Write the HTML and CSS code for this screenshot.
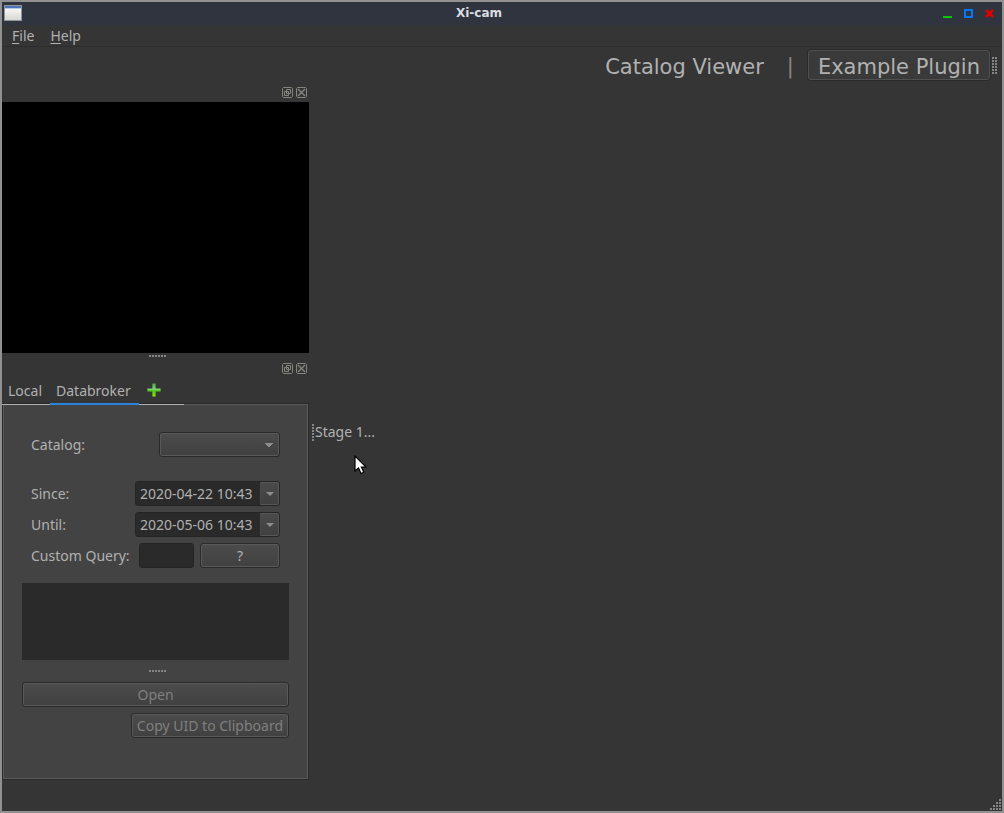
FILE: index.html
```html
<!DOCTYPE html>
<html lang="en">
<head>
<meta charset="utf-8">
<title>Xi-cam</title>
<link rel="stylesheet" href="styles.css">
</head>
<body>
<div class="window">
  <header class="titlebar">
    <svg class="app-icon" width="18" height="16" viewBox="0 0 18 16" aria-hidden="true">
      <defs><linearGradient id="page" x1="0" y1="0" x2="0" y2="1"><stop offset="0" stop-color="#fff"/><stop offset="1" stop-color="#d6d8d2"/></linearGradient></defs>
      <rect width="18" height="16" fill="#8f979c"/>
      <rect x="1" y="1" width="16" height="14" fill="url(#page)"/>
      <rect x="1" y="1" width="16" height="2" fill="#4a74b4"/>
      <rect x="1" y="3" width="16" height="1" fill="#b4cbe8"/>
    </svg>
    <h1 class="title">Xi-cam</h1>
    <div class="window-buttons">
      <button class="icon-button" aria-label="Minimize"><svg width="9" height="9"><path d="M0 7h9v2H0z" fill="#00c800"/></svg></button>
      <button class="icon-button" aria-label="Maximize"><svg width="9" height="9"><path d="M1 1h7v7H1z" fill="none" stroke="#0078ff" stroke-width="2"/></svg></button>
      <button class="icon-button" aria-label="Close"><svg width="9" height="9"><path d="M1 1l7 7M8 1l-7 7" stroke="#e00000" stroke-width="2.6"/></svg></button>
    </div>
  </header>
  <nav class="menubar">
    <button class="menu"><u>F</u>ile</button>
    <button class="menu"><u>H</u>elp</button>
  </nav>
  <div class="toolbar">
    <button class="plugin">Catalog Viewer</button>
    <span class="divider">|</span>
    <button class="plugin plugin-active">Example Plugin</button>
    <span class="grip toolbar-grip"></span>
  </div>
  <main class="workspace">
    <aside class="docks">
      <div class="dock-title">
        <button class="icon-button" aria-label="Float preview"><svg class="dock-icon" viewBox="0 0 11 11"><path d="M1.5.5h8l1 1v8l-1 1h-8l-1-1v-8z"/><path d="M4.5 2.5h4v4h-4zM2.5 4.5h4v4h-4z"/></svg></button>
        <button class="icon-button" aria-label="Close preview"><svg class="dock-icon" viewBox="0 0 11 11"><path d="M1.5.5h8l1 1v8l-1 1h-8l-1-1v-8z"/><path d="M2 2l7 7M9 2l-7 7" stroke-width="1.4"/></svg></button>
      </div>
      <div class="preview"></div>
      <div class="splitter"><span class="grip grip-wide"></span></div>
      <div class="dock-title">
        <button class="icon-button" aria-label="Float data browser"><svg class="dock-icon" viewBox="0 0 11 11"><path d="M1.5.5h8l1 1v8l-1 1h-8l-1-1v-8z"/><path d="M4.5 2.5h4v4h-4zM2.5 4.5h4v4h-4z"/></svg></button>
        <button class="icon-button" aria-label="Close data browser"><svg class="dock-icon" viewBox="0 0 11 11"><path d="M1.5.5h8l1 1v8l-1 1h-8l-1-1v-8z"/><path d="M2 2l7 7M9 2l-7 7" stroke-width="1.4"/></svg></button>
      </div>
      <div class="tabs" role="tablist">
        <button class="tab" role="tab" aria-selected="false">Local</button>
        <button class="tab tab-active" role="tab" aria-selected="true">Databroker</button>
        <button class="tab tab-add" aria-label="Add data source"><svg width="14" height="14" viewBox="0 0 14 14"><defs><linearGradient id="plus" x1="0" y1="0" x2="0" y2="1"><stop offset="0" stop-color="#4fa848"/><stop offset=".45" stop-color="#7fd870"/><stop offset=".55" stop-color="#4cc818"/><stop offset="1" stop-color="#8cf000"/></linearGradient></defs><path d="M5.4 .4h3.2v5h5v3.2h-5v5H5.4v-5h-5V5.4h5z" fill="url(#plus)"/></svg></button>
      </div>
      <section class="panel">
        <form class="query">
          <div class="row row-catalog">
            <label for="catalog">Catalog:</label>
            <select id="catalog" class="control catalog"><option></option></select>
          </div>
          <div class="row">
            <label for="since">Since:</label>
            <span class="date"><input id="since" class="date-input" type="text" value="2020-04-22 10:43"><button type="button" class="date-button" aria-label="Pick since date"><span class="arrow"></span></button></span>
          </div>
          <div class="row">
            <label for="until">Until:</label>
            <span class="date"><input id="until" class="date-input" type="text" value="2020-05-06 10:43"><button type="button" class="date-button" aria-label="Pick until date"><span class="arrow"></span></button></span>
          </div>
          <div class="row">
            <label for="custom">Custom Query:</label>
            <span class="custom-fields">
              <input id="custom" class="custom" type="text">
              <button type="button" class="control help">?</button>
            </span>
          </div>
        </form>
        <div class="results"></div>
        <div class="panel-splitter"><span class="grip grip-wide"></span></div>
        <div class="actions">
          <button class="control open" disabled>Open</button>
          <button class="control copy" disabled>Copy UID to Clipboard</button>
        </div>
      </section>
    </aside>
    <section class="stage">
      <span class="grip grip-tall"></span>
      <p class="stage-text">Stage 1...</p>
    </section>
  </main>
  <footer class="statusbar">
    <svg width="12" height="12" viewBox="0 0 12 12" fill="#858585" aria-hidden="true"><path d="M9 0h2v2H9zM6 3h2v2H6zM9 3h2v2H9zM3 6h2v2H3zM6 6h2v2H6zM9 6h2v2H9zM0 9h2v2H0zM3 9h2v2H3zM6 9h2v2H6zM9 9h2v2H9z"/></svg>
  </footer>
  <svg class="pointer" width="13" height="20" viewBox="0 0 13 20" aria-hidden="true"><path d="M1 1v15l3.5-3 2.5 5.5 2.8-1.3-2.4-5.2H12z" fill="#fff" stroke="#000" stroke-width="1.2"/></svg>
</div>
</body>
</html>
```

FILE: styles.css
```css
* {
  box-sizing: border-box;
}

body {
  margin: 0;
  background: #353535;
  color: #b1b1b1;
  font: 14px/20px "Noto Sans", "Open Sans", sans-serif;
}

button,
input,
select {
  margin: 0;
  padding: 0;
  border: 0;
  background: none;
  color: inherit;
  font: inherit;
}

.window {
  position: relative;
  display: flex;
  flex-direction: column;
  min-height: 100vh;
  border: 2px solid #919191;
}

.titlebar {
  display: grid;
  grid-template-columns: 1fr auto 1fr;
  align-items: center;
  height: 23px;
  padding: 0 8px 1px 2px;
  background: #2f343f;
}

.title {
  margin: 0;
  padding-right: 40px;
  color: #dadde2;
  font: bold 12px/20px "DejaVu Sans", sans-serif;
}

.window-buttons {
  display: flex;
  justify-content: flex-end;
  gap: 12px;
}

.icon-button {
  display: flex;
}

.menubar {
  display: flex;
  gap: 16px;
  height: 22px;
  padding-left: 10px;
  border-bottom: 1px solid #2d2d2d;
}

.menu u {
  text-underline-offset: 2px;
  text-decoration-thickness: 1px;
}

.toolbar {
  display: flex;
  justify-content: flex-end;
  align-items: center;
  height: 36px;
  padding-right: 5px;
  font: 21px/28px "DejaVu Sans", sans-serif;
}

.plugin {
  height: 30px;
  padding: 2px 9px 0;
  border: 1px solid transparent;
  border-radius: 3px;
}

.divider {
  padding: 2px 14px 0 13px;
  color: #858585;
}

.plugin-active {
  border-color: #505050;
  background: #3a3a3a;
  box-shadow: 0 0 0 1px #2a2a2a;
}

.grip {
  flex: none;
  background: #858585;
  -webkit-mask: repeating-linear-gradient(90deg, #000 0 2px, transparent 2px 3px);
  mask: repeating-linear-gradient(90deg, #000 0 2px, transparent 2px 3px);
}

.toolbar-grip,
.grip-tall {
  background: repeating-linear-gradient(#858585 0 2px, transparent 2px 3px);
}

.toolbar-grip {
  width: 5px;
  height: 17px;
  margin-left: 2px;
}

.grip-wide {
  width: 17px;
  height: 2px;
}

.grip-tall {
  width: 2px;
  height: 17px;
}

.workspace {
  flex: 1;
  display: flex;
}

.docks {
  flex: none;
  display: flex;
  flex-direction: column;
  width: 307px;
}

.dock-title {
  display: flex;
  justify-content: flex-end;
  align-items: center;
  gap: 3px;
  height: 19px;
  padding-right: 2px;
}

.dock-icon {
  width: 11px;
  height: 11px;
  fill: none;
  stroke: #85857f;
}

.preview {
  flex: 1;
  min-height: 120px;
  background: #000;
}

.splitter {
  display: flex;
  justify-content: center;
  padding: 2px 0 2px 4px;
}

.tabs {
  position: relative;
  z-index: 1;
  display: flex;
  align-self: flex-start;
  height: 27px;
  margin-bottom: -1px;
}

.tab {
  padding: 0 8px 0 6px;
  border-bottom: 1px solid #b1b1b1;
}

.tab-active {
  border-bottom: 2px solid #2a82da;
}

.tab-add {
  display: flex;
  align-items: center;
  padding: 0 23px 3px 8px;
}

.panel {
  margin: 0 1px 1px;
  padding: 27px 18px 40px;
  border: 1px solid #5a5a5a;
  background: #434343;
  box-shadow: 0 0 0 1px #2a2a2a;
}

.query {
  display: flex;
  flex-direction: column;
  gap: 6px;
  padding: 0 9px;
}

.row {
  display: flex;
  justify-content: space-between;
  align-items: center;
}

.row-catalog {
  margin-bottom: 18px;
}

.control {
  height: 25px;
  border: 1px solid #2a2a2a;
  border-radius: 3px;
  background: linear-gradient(#4c4c4c, #404040);
  box-shadow: inset 0 0 0 1px #595959;
}

.control:disabled {
  color: #808080;
}

.catalog {
  appearance: none;
  width: 121px;
  background:
    conic-gradient(from 315deg at 50% 100%, #8d8d8d 90deg, transparent 0) right 6px center / 8px 4px no-repeat,
    linear-gradient(#4c4c4c, #404040);
}

.date {
  display: flex;
  width: 145px;
  height: 25px;
  border: 1px solid #252525;
  border-radius: 3px;
  background: #2a2a2a;
}

.date-input {
  flex: 1;
  min-width: 0;
  padding-left: 4px;
}

.date-button {
  display: flex;
  align-items: center;
  justify-content: center;
  width: 19px;
  border: 1px solid #575757;
  border-left-color: #4a4a4a;
  border-radius: 0 2px 2px 0;
  background: linear-gradient(#4a4a4a, #404040);
}

.arrow {
  border: 4px solid transparent;
  border-top-color: #8d8d8d;
  border-bottom: 0;
}

.custom-fields {
  display: flex;
  gap: 6px;
}

.custom {
  width: 55px;
  height: 25px;
  border: 1px solid #252525;
  border-radius: 3px;
  background: #2a2a2a;
}

.help {
  width: 80px;
}

.results {
  height: 77px;
  margin-top: 15px;
  background: #2a2a2a;
}

.panel-splitter {
  display: flex;
  justify-content: center;
  padding: 10px 0 10px 4px;
}

.actions {
  display: flex;
  flex-direction: column;
  gap: 6px;
}

.copy {
  align-self: flex-end;
  padding: 0 5px;
}

.stage {
  flex: 1;
  display: flex;
  align-items: center;
  gap: 1px;
  padding: 1px 0 0 3px;
}

.stage-text {
  margin: 0;
}

.statusbar {
  display: flex;
  justify-content: flex-end;
  align-items: flex-end;
  height: 31px;
}

.pointer {
  position: absolute;
  left: 352px;
  top: 453px;
}
```
